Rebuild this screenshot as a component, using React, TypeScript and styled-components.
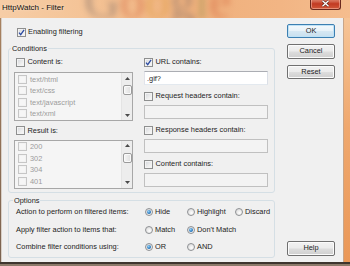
import React from 'react';
import styled, { createGlobalStyle } from 'styled-components';

const Global = createGlobalStyle`
  *, *::before, *::after { box-sizing: border-box; }
  html, body { margin: 0; padding: 0; width: 350px; height: 266px; overflow: hidden; background: #8a7868; }
  body { font-family: "Liberation Sans", Arial, sans-serif; font-size: 7.4px; color: #1c1c1c; }
  #root { width: 350px; height: 266px; }
`;

const Window = styled.div`
  width: 350px;
  height: 266px;
  display: flex;
  flex-direction: column;
`;

const TitleBar = styled.div`
  position: relative;
  height: 18px;
  flex: none;
  overflow: hidden;
  display: flex;
  align-items: flex-start;
  padding-left: 2px;
  background: linear-gradient(90deg, #f6cda6 0%, #f4c396 25%, #efb07c 55%, #f2b584 80%, #f5bd8e 100%);
`;

const Watermark = styled.div`
  position: absolute;
  left: 84px;
  top: -25px;
  font-family: "Liberation Serif", serif;
  font-size: 50px;
  line-height: 1;
  filter: blur(3px);
  opacity: 0.5;
  white-space: nowrap;
  pointer-events: none;
`;

const WLetter = styled.span<{ $c: string }>`
  color: ${(p) => p.$c};
`;

const TitleText = styled.div`
  position: relative;
  font-size: 8px;
  line-height: 9px;
  padding-top: 2.5px;
  color: #111;
  text-shadow: 0 0 3px rgba(255, 235, 215, 0.9);
`;

const CloseButton = styled.div`
  position: relative;
  margin-left: auto;
  margin-right: 9px;
  margin-top: -4px;
  width: 31px;
  height: 14px;
  border: 1px solid #6b2a1e;
  border-top: none;
  border-radius: 0 0 3px 3px;
  background: linear-gradient(#e8a08c 0%, #d46a52 40%, #c23a22 60%, #d0583a 100%);
  box-shadow: inset 0 0 0 1px rgba(255, 200, 180, 0.5);
  display: flex;
  align-items: flex-end;
  justify-content: center;
  padding-bottom: 2px;
`;

const Frame = styled.div`
  display: flex;
  height: 244px;
  flex: none;
`;

const LeftEdge = styled.div`
  width: 2px;
  flex: none;
  background: linear-gradient(#a88260, #7a6250);
  border-right: 1px solid #d8cfc6;
`;

const Client = styled.div`
  width: 341px;
  flex: none;
  background: #f0f0f0;
  display: flex;
  padding-left: 6px;
`;

const RightEdge = styled.div`
  width: 7px;
  flex: none;
  border-left: 1px solid #c8a68a;
  background: linear-gradient(180deg, #f6c496 0%, #efa86e 45%, #ea9858 100%);
`;

const BottomEdge = styled.div`
  height: 4px;
  flex: none;
  border-top: 2px solid #3e352e;
  background: #8c7a6a;
`;

const Main = styled.div`
  width: 267px;
  flex: none;
  padding-top: 9px;
  display: flex;
  flex-direction: column;
`;

const Side = styled.div`
  width: 48px;
  flex: none;
  margin-left: 12px;
  padding-top: 5.5px;
  padding-bottom: 6.5px;
  display: flex;
  flex-direction: column;
  gap: 6px;
`;

const Button = styled.button<{ $default?: boolean; $bottom?: boolean }>`
  width: 48px;
  height: 14.5px;
  padding: 0;
  margin: 0;
  margin-top: ${(p) => (p.$bottom ? 'auto' : '0')};
  font-family: "Liberation Sans", Arial, sans-serif;
  font-size: 7.4px;
  line-height: 12px;
  color: #1c1c1c;
  border-radius: 2px;
  border: 1px solid ${(p) => (p.$default ? '#3c7fb1' : '#707070')};
  background: ${(p) =>
    p.$default
      ? 'linear-gradient(#f4f9fc 0%, #e8f2f8 48%, #d6e8f3 52%, #c8dfee 100%)'
      : 'linear-gradient(#f2f2f2 0%, #ebebeb 48%, #dddddd 52%, #cfcfcf 100%)'};
  box-shadow: inset 0 0 0 1px ${(p) => (p.$default ? '#bfe2f6' : '#fbfbfb')};
`;

const CheckRow = styled.div<{ $indent?: number; $top?: number }>`
  height: 10px;
  display: flex;
  align-items: center;
  gap: 2.5px;
  margin-left: ${(p) => p.$indent ?? 0}px;
  margin-top: ${(p) => p.$top ?? 0}px;
  line-height: 10px;
  white-space: nowrap;
`;

const Box = styled.span<{ $disabled?: boolean }>`
  width: 9px;
  height: 9px;
  flex: none;
  border: 1px solid ${(p) => (p.$disabled ? '#c6c6c6' : '#8e8f8f')};
  background: ${(p) =>
    p.$disabled ? '#f6f6f6' : 'linear-gradient(135deg, #d3d6db 0%, #eeeeee 60%, #fbfbfb 100%)'};
  box-shadow: inset 0 0 0 1px ${(p) => (p.$disabled ? '#f2f2f2' : '#f3f3f3')};
  display: flex;
  align-items: center;
  justify-content: center;
`;

const Check: React.FC<{ checked?: boolean; disabled?: boolean }> = ({ checked, disabled }) => (
  <Box $disabled={disabled}>
    {checked && (
      <svg width="7" height="7" viewBox="0 0 7 7">
        <path d="M1 3.6 L2.7 5.6 L6.1 0.9" fill="none" stroke="#2b4ba2" strokeWidth="1.3" />
      </svg>
    )}
  </Box>
);

const Group = styled.fieldset<{ $pad: string; $top: number }>`
  margin: ${(p) => p.$top}px 0 0 0;
  min-width: 0;
  border: 1px solid #d5dfe5;
  border-radius: 3px;
  padding: ${(p) => p.$pad};
`;

const Legend = styled.legend`
  padding: 0 1px;
  margin-left: -3px;
  font-size: 7.4px;
  line-height: 9px;
  color: #1c1c1c;
`;

const ConditionsGrid = styled.div`
  display: grid;
  grid-template-columns: 119px 124px;
  column-gap: 11px;
`;

const Column = styled.div`
  display: flex;
  flex-direction: column;
`;

const ListBox = styled.div<{ $top: number }>`
  margin-top: ${(p) => p.$top}px;
  height: 49px;
  border: 1px solid #a7a7a7;
  background: #f5f5f5;
  display: flex;
  overflow: hidden;
`;

const ListItems = styled.div`
  flex: 1;
  padding: 0.5px 0 0 3px;
  display: flex;
  flex-direction: column;
`;

const ListItem = styled.div`
  height: 11.5px;
  flex: none;
  display: flex;
  align-items: center;
  gap: 3px;
  color: #9c9c9c;
  white-space: nowrap;
`;

const ScrollBar = styled.div`
  width: 11px;
  flex: none;
  display: flex;
  flex-direction: column;
  background: #ededed;
  border-left: 1px solid #e4e4e4;
`;

const ScrollArrow = styled.div<{ $bottom?: boolean }>`
  height: 10px;
  flex: none;
  margin-top: ${(p) => (p.$bottom ? 'auto' : '0')};
  display: flex;
  align-items: center;
  justify-content: center;
`;

const ScrollThumb = styled.div`
  height: 10px;
  flex: none;
  margin: 2px 0.5px 0;
  border: 1px solid #9b9b9b;
  border-radius: 2px;
  background: linear-gradient(90deg, #f6f6f6, #dedede);
  box-shadow: inset 0 0 0 1px #fafafa;
`;

const Arrow: React.FC<{ down?: boolean }> = ({ down }) => (
  <svg width="5" height="3" viewBox="0 0 5 3">
    <path d={down ? 'M0 0 H5 L2.5 3 Z' : 'M0 3 H5 L2.5 0 Z'} fill="#4a4a4a" />
  </svg>
);

const TextField = styled.input`
  margin: 4px 0 0 0;
  width: 124px;
  height: 14px;
  padding: 0 2px;
  font-family: "Liberation Sans", Arial, sans-serif;
  font-size: 7.4px;
  color: #1c1c1c;
  border: 1px solid;
  border-color: #abadb3 #dbdfe6 #e3e9ef #e2e3ea;
  background: #ffffff;
  outline: none;
  &:disabled {
    background: #f3f3f3;
    border-color: #c0c0c0;
  }
`;

const OptionsGrid = styled.div`
  display: grid;
  grid-template-columns: 129px 42px 48px auto;
  row-gap: 7.5px;
`;

const OptLabel = styled.div`
  height: 10px;
  line-height: 10px;
  white-space: nowrap;
`;

const RadioItem = styled.div`
  height: 10px;
  display: flex;
  align-items: center;
  gap: 2px;
  line-height: 10px;
  white-space: nowrap;
`;

const RadioCircle = styled.span<{ $on?: boolean }>`
  width: 8px;
  height: 8px;
  flex: none;
  border-radius: 50%;
  border: 1px solid #8f9194;
  background: radial-gradient(circle at 60% 65%, #ffffff 0%, #e4e4e4 60%, #cfd1d4 100%);
  display: flex;
  align-items: center;
  justify-content: center;
  &::after {
    content: '';
    display: ${(p) => (p.$on ? 'block' : 'none')};
    width: 4px;
    height: 4px;
    border-radius: 50%;
    background: radial-gradient(circle at 40% 35%, #9ad4f6 0%, #2f7fc4 55%, #174f8e 100%);
  }
`;

const Radio: React.FC<{ on?: boolean; label: string }> = ({ on, label }) => (
  <RadioItem>
    <RadioCircle $on={on} />
    <span>{label}</span>
  </RadioItem>
);

const contentTypes = ['text/html', 'text/css', 'text/javascript', 'text/xml'];
const results = ['200', '302', '304', '401'];

const List: React.FC<{ items: string[]; top: number }> = ({ items, top }) => (
  <ListBox $top={top}>
    <ListItems>
      {items.map((t) => (
        <ListItem key={t}>
          <Check disabled />
          <span>{t}</span>
        </ListItem>
      ))}
    </ListItems>
    <ScrollBar>
      <ScrollArrow>
        <Arrow />
      </ScrollArrow>
      <ScrollThumb />
      <ScrollArrow $bottom>
        <Arrow down />
      </ScrollArrow>
    </ScrollBar>
  </ListBox>
);

export default function App() {
  return (
    <>
      <Global />
      <Window>
        <TitleBar>
          <Watermark aria-hidden="true">
            <WLetter $c="#7a6a66">G</WLetter>
            <WLetter $c="#d0603a">o</WLetter>
            <WLetter $c="#dc9a3a">o</WLetter>
            <WLetter $c="#7a6a66">g</WLetter>
            <WLetter $c="#8c8c48">l</WLetter>
            <WLetter $c="#d0603a">e</WLetter>
          </Watermark>
          <TitleText>HttpWatch - Filter</TitleText>
          <CloseButton>
            <svg width="9" height="7" viewBox="0 0 9 7">
              <path d="M1.5 0.8 L7.5 6.2 M7.5 0.8 L1.5 6.2" stroke="#5a2418" strokeWidth="2.6" />
              <path d="M1.5 0.8 L7.5 6.2 M7.5 0.8 L1.5 6.2" stroke="#ffffff" strokeWidth="1.4" />
            </svg>
          </CloseButton>
        </TitleBar>
        <Frame>
          <LeftEdge />
          <Client>
            <Main>
              <CheckRow $indent={8.5}>
                <Check checked />
                <span>Enabling filtering</span>
              </CheckRow>
              <Group $top={6.5} $pad="4.5px 5px 3px 5px">
                <Legend>Conditions</Legend>
                <ConditionsGrid>
                  <Column>
                    <CheckRow $indent={2}>
                      <Check />
                      <span>Content is:</span>
                    </CheckRow>
                    <List items={contentTypes} top={5} />
                    <CheckRow $indent={2} $top={4.5}>
                      <Check />
                      <span>Result is:</span>
                    </CheckRow>
                    <List items={results} top={4} />
                  </Column>
                  <Column>
                    <CheckRow>
                      <Check checked />
                      <span>URL contains:</span>
                    </CheckRow>
                    <TextField readOnly value=".gif?" />
                    <CheckRow $top={6}>
                      <Check />
                      <span>Request headers contain:</span>
                    </CheckRow>
                    <TextField disabled value="" />
                    <CheckRow $top={6}>
                      <Check />
                      <span>Response headers contain:</span>
                    </CheckRow>
                    <TextField disabled value="" />
                    <CheckRow $top={6}>
                      <Check />
                      <span>Content contains:</span>
                    </CheckRow>
                    <TextField disabled value="" />
                  </Column>
                </ConditionsGrid>
              </Group>
              <Group $top={3} $pad="2.5px 4px 4.5px 7px">
                <Legend>Options</Legend>
                <OptionsGrid>
                  <OptLabel>Action to perform on filtered items:</OptLabel>
                  <Radio on label="Hide" />
                  <Radio label="Highlight" />
                  <Radio label="Discard" />
                  <OptLabel>Apply filter action to items that:</OptLabel>
                  <Radio label="Match" />
                  <Radio on label="Don't Match" />
                  <span />
                  <OptLabel>Combine filter conditions using:</OptLabel>
                  <Radio on label="OR" />
                  <Radio label="AND" />
                  <span />
                </OptionsGrid>
              </Group>
            </Main>
            <Side>
              <Button $default>OK</Button>
              <Button>Cancel</Button>
              <Button>Reset</Button>
              <Button $bottom>Help</Button>
            </Side>
          </Client>
          <RightEdge />
        </Frame>
        <BottomEdge />
      </Window>
    </>
  );
}
